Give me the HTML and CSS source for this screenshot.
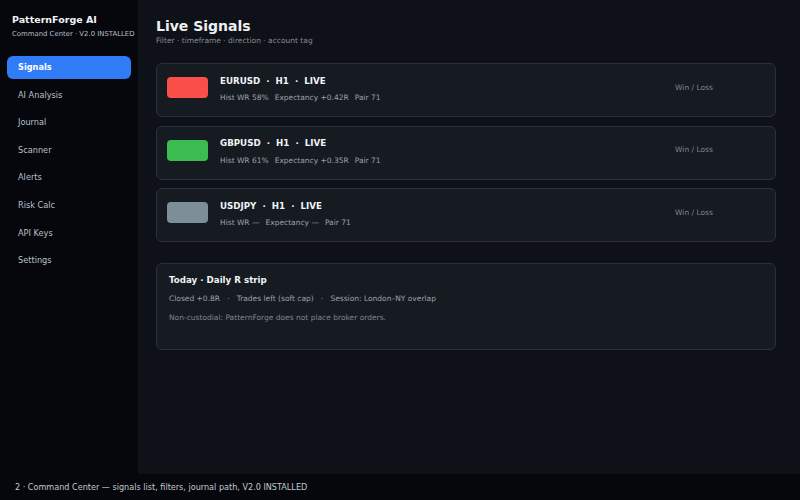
FILE: index.html
```html
<!DOCTYPE html>
<html>
<head>
<meta charset="utf-8">
<link rel="stylesheet" href="styles.css">
</head>
<body>
<div class="app">
  <aside class="sidebar">
    <div class="brand">PatternForge AI</div>
    <div class="brand-sub">Command Center · V2.0 INSTALLED</div>
    <nav class="nav">
      <div class="nav-item active">Signals</div>
      <div class="nav-item">AI Analysis</div>
      <div class="nav-item">Journal</div>
      <div class="nav-item">Scanner</div>
      <div class="nav-item">Alerts</div>
      <div class="nav-item">Risk Calc</div>
      <div class="nav-item">API Keys</div>
      <div class="nav-item">Settings</div>
    </nav>
  </aside>
  <main class="main">
    <h1 class="title">Live Signals</h1>
    <div class="subtitle">Filter · timeframe · direction · account tag</div>
    <div class="list">
      <div class="card signal">
        <div class="swatch red"></div>
        <div class="info">
          <div class="pair">EURUSD &nbsp;·&nbsp; H1 &nbsp;·&nbsp; LIVE</div>
          <div class="meta"><span>Hist WR 58%</span><span>Expectancy +0.42R</span><span>Pair 71</span></div>
        </div>
        <div class="wl">Win / Loss</div>
      </div>
      <div class="card signal">
        <div class="swatch green"></div>
        <div class="info">
          <div class="pair">GBPUSD &nbsp;·&nbsp; H1 &nbsp;·&nbsp; LIVE</div>
          <div class="meta"><span>Hist WR 61%</span><span>Expectancy +0.35R</span><span>Pair 71</span></div>
        </div>
        <div class="wl">Win / Loss</div>
      </div>
      <div class="card signal">
        <div class="swatch grey"></div>
        <div class="info">
          <div class="pair">USDJPY &nbsp;·&nbsp; H1 &nbsp;·&nbsp; LIVE</div>
          <div class="meta"><span>Hist WR —</span><span>Expectancy —</span><span>Pair 71</span></div>
        </div>
        <div class="wl">Win / Loss</div>
      </div>
    </div>
    <div class="card daily">
      <div class="daily-title">Today · Daily R strip</div>
      <div class="daily-line">Closed +0.8R &nbsp; · &nbsp; Trades left (soft cap) &nbsp; · &nbsp; Session: London–NY overlap</div>
      <div class="daily-note">Non-custodial: PatternForge does not place broker orders.</div>
    </div>
  </main>
</div>
<footer class="footer">2 · Command Center — signals list, filters, journal path, V2.0 INSTALLED</footer>
</body>
</html>
```
FILE: styles.css
```css
* { box-sizing: border-box; }
html, body { margin: 0; padding: 0; }
body {
  width: 800px;
  height: 500px;
  overflow: hidden;
  background: #05070c;
  font-family: "DejaVu Sans", sans-serif;
  color: #e6edf3;
  display: flex;
  flex-direction: column;
}
.app { display: flex; height: 474px; }
.sidebar {
  width: 138px;
  background: #05070c;
  padding: 14px 0 0 7px;
}
.brand { font-size: 9.5px; line-height: 12px; font-weight: bold; color: #f0f3f6; padding-left: 5px; }
.brand-sub { font-size: 6.9px; line-height: 9px; color: #b8bec6; margin-top: 4px; padding-left: 5px; white-space: nowrap; }
.nav { margin-top: 17px; margin-right: 7px; display: flex; flex-direction: column; gap: 4.6px; }
.nav-item {
  height: 23px;
  line-height: 23px;
  padding-left: 11px;
  font-size: 8.2px;
  color: #b9c0c8;
  border-radius: 6px;
}
.nav-item.active { background: #2f7cf6; color: #ffffff; font-weight: bold; }
.main {
  flex: 1;
  background: #0e1117;
  padding: 16px 24px 0 18px;
}
.title { margin: 0; font-size: 14px; font-weight: bold; color: #eef1f4; line-height: 20px; }
.subtitle { font-size: 7.5px; line-height: 10px; color: #858b93; }
.list { margin-top: 17px; display: flex; flex-direction: column; gap: 8.5px; }
.card {
  background: #161b22;
  border: 1px solid #2b313a;
  border-radius: 6px;
}
.signal {
  height: 54px;
  display: flex;
  align-items: center;
  padding: 0 10px;
}
.swatch { width: 41px; height: 21px; border-radius: 4px; margin-bottom: 5px; }
.red { background: #fb4f4a; }
.green { background: #3bbc51; }
.grey { background: #7d8e99; }
.info { margin-left: 12px; flex: 1; margin-bottom: 1px; }
.pair { font-size: 8.7px; line-height: 11px; font-weight: bold; color: #f0f3f6; }
.meta { font-size: 7.5px; line-height: 10px; color: #9aa2ab; margin-top: 6.5px; display: flex; gap: 6px; }
.wl { font-size: 7.5px; color: #7c848e; width: 120px; text-align: center; margin-right: 11px; margin-bottom: 6px; }
.daily { margin-top: 21px; height: 87px; padding: 11px 12px; }
.daily-title { font-size: 8.7px; line-height: 11px; font-weight: bold; color: #f0f3f6; }
.daily-line { font-size: 7.5px; line-height: 10px; color: #9aa2ab; margin-top: 8px; }
.daily-note { font-size: 7.5px; line-height: 10px; color: #7d858f; margin-top: 9px; }
.footer {
  height: 26px;
  line-height: 26px;
  padding-left: 15px;
  font-size: 8.1px;
  color: #c2c7cd;
  background: #05070c;
}
```
